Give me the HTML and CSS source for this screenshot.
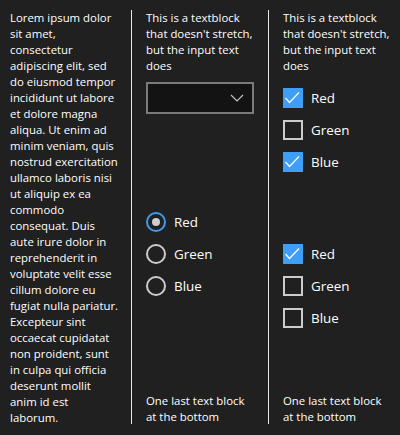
FILE: index.html
```html
<!DOCTYPE html>
<html lang="en">
<head>
<meta charset="utf-8">
<title>Layout sample</title>
<link rel="stylesheet" href="styles.css">
</head>
<body>
<div class="page">
  <div class="col col-text">
    <p class="txt lorem">Lorem ipsum dolor<br>sit amet,<br>consectetur<br>adipiscing elit, sed<br>do eiusmod tempor<br>incididunt ut labore<br>et dolore magna<br>aliqua. Ut enim ad<br>minim veniam, quis<br>nostrud exercitation<br>ullamco laboris nisi<br>ut aliquip ex ea<br>commodo<br>consequat. Duis<br>aute irure dolor in<br>reprehenderit in<br>voluptate velit esse<br>cillum dolore eu<br>fugiat nulla pariatur.<br>Excepteur sint<br>occaecat cupidatat<br>non proident, sunt<br>in culpa qui officia<br>deserunt mollit<br>anim id est<br>laborum.</p>
  </div>
  <div class="divider"></div>
  <div class="col col-mid">
    <p class="txt">This is a textblock that doesn't stretch, but the input text does</p>
    <div class="combo">
      <svg class="chevron" width="14" height="8" viewBox="0 0 14 8"><polyline points="1,1 7,7 13,1" fill="none" stroke="#c6c6c6" stroke-width="1.1"/></svg>
    </div>
    <div class="group middle">
      <div class="item"><span class="radio checked"></span><span class="label">Red</span></div>
      <div class="item"><span class="radio"></span><span class="label">Green</span></div>
      <div class="item"><span class="radio"></span><span class="label">Blue</span></div>
    </div>
    <p class="txt">One last text block at the bottom</p>
  </div>
  <div class="divider"></div>
  <div class="col col-right">
    <p class="txt">This is a textblock that doesn't stretch, but the input text does</p>
    <div class="group first">
      <div class="item"><span class="box checked"><svg width="20" height="20" viewBox="0 0 20 20"><polyline points="2.5,10 6.5,14.5 16,4.5" fill="none" stroke="#ffffff" stroke-width="1.2"/></svg></span><span class="label">Red</span></div>
      <div class="item"><span class="box"></span><span class="label">Green</span></div>
      <div class="item"><span class="box checked"><svg width="20" height="20" viewBox="0 0 20 20"><polyline points="2.5,10 6.5,14.5 16,4.5" fill="none" stroke="#ffffff" stroke-width="1.2"/></svg></span><span class="label">Blue</span></div>
    </div>
    <div class="group middle">
      <div class="item"><span class="box checked"><svg width="20" height="20" viewBox="0 0 20 20"><polyline points="2.5,10 6.5,14.5 16,4.5" fill="none" stroke="#ffffff" stroke-width="1.2"/></svg></span><span class="label">Red</span></div>
      <div class="item"><span class="box"></span><span class="label">Green</span></div>
      <div class="item"><span class="box"></span><span class="label">Blue</span></div>
    </div>
    <p class="txt">One last text block at the bottom</p>
  </div>
</div>
</body>
</html>
```

FILE: styles.css
```css
html, body {
  margin: 0;
  padding: 0;
  background: #202020;
}

body {
  font-family: "Open Sans", "Noto Sans", sans-serif;
  color: #ffffff;
  width: 400px;
  height: 435px;
  overflow: hidden;
}

.page {
  display: flex;
  height: 435px;
  box-sizing: border-box;
  padding: 10px 0 10px 0;
}

.divider {
  width: 1px;
  background: #e8e8e8;
  margin-bottom: 1px;
  flex: none;
}

.col {
  display: flex;
  flex-direction: column;
  flex: none;
  box-sizing: border-box;
}

.col-text {
  width: 131px;
  padding: 0 10px;
}

.col-mid {
  width: 136px;
  padding: 0 14px;
}

.col-right {
  width: 131px;
  padding: 0 9px 0 14px;
}

.txt {
  margin: 0;
  font-size: 11.4px;
  line-height: 16px;
}

.lorem {
  white-space: nowrap;
}

.combo {
  margin-top: 8px;
  height: 32px;
  box-sizing: border-box;
  border: 2px solid #7a7a7a;
  background: #131313;
  display: flex;
  align-items: center;
  justify-content: flex-end;
  padding-right: 8px;
}

.chevron {
  display: block;
}

.group {
  display: flex;
  flex-direction: column;
}

.group.first {
  margin-top: 8px;
}

.group.middle {
  margin: auto 0;
}

.item {
  height: 32px;
  display: flex;
  align-items: center;
}

.label {
  margin-left: 8px;
  font-size: 13.4px;
  line-height: 20px;
}

.box {
  width: 20px;
  height: 20px;
  box-sizing: border-box;
  border: 2px solid #cccccc;
  flex: none;
}

.box.checked {
  border: none;
  background: #3f9ef5;
}

.box svg {
  display: block;
}

.radio {
  width: 20px;
  height: 20px;
  box-sizing: border-box;
  border: 2px solid #cccccc;
  border-radius: 50%;
  flex: none;
  display: flex;
  align-items: center;
  justify-content: center;
}

.radio.checked {
  border-color: #3d9cf0;
}

.radio.checked::after {
  content: "";
  width: 8px;
  height: 8px;
  border-radius: 50%;
  background: #cfcfcf;
}
```
